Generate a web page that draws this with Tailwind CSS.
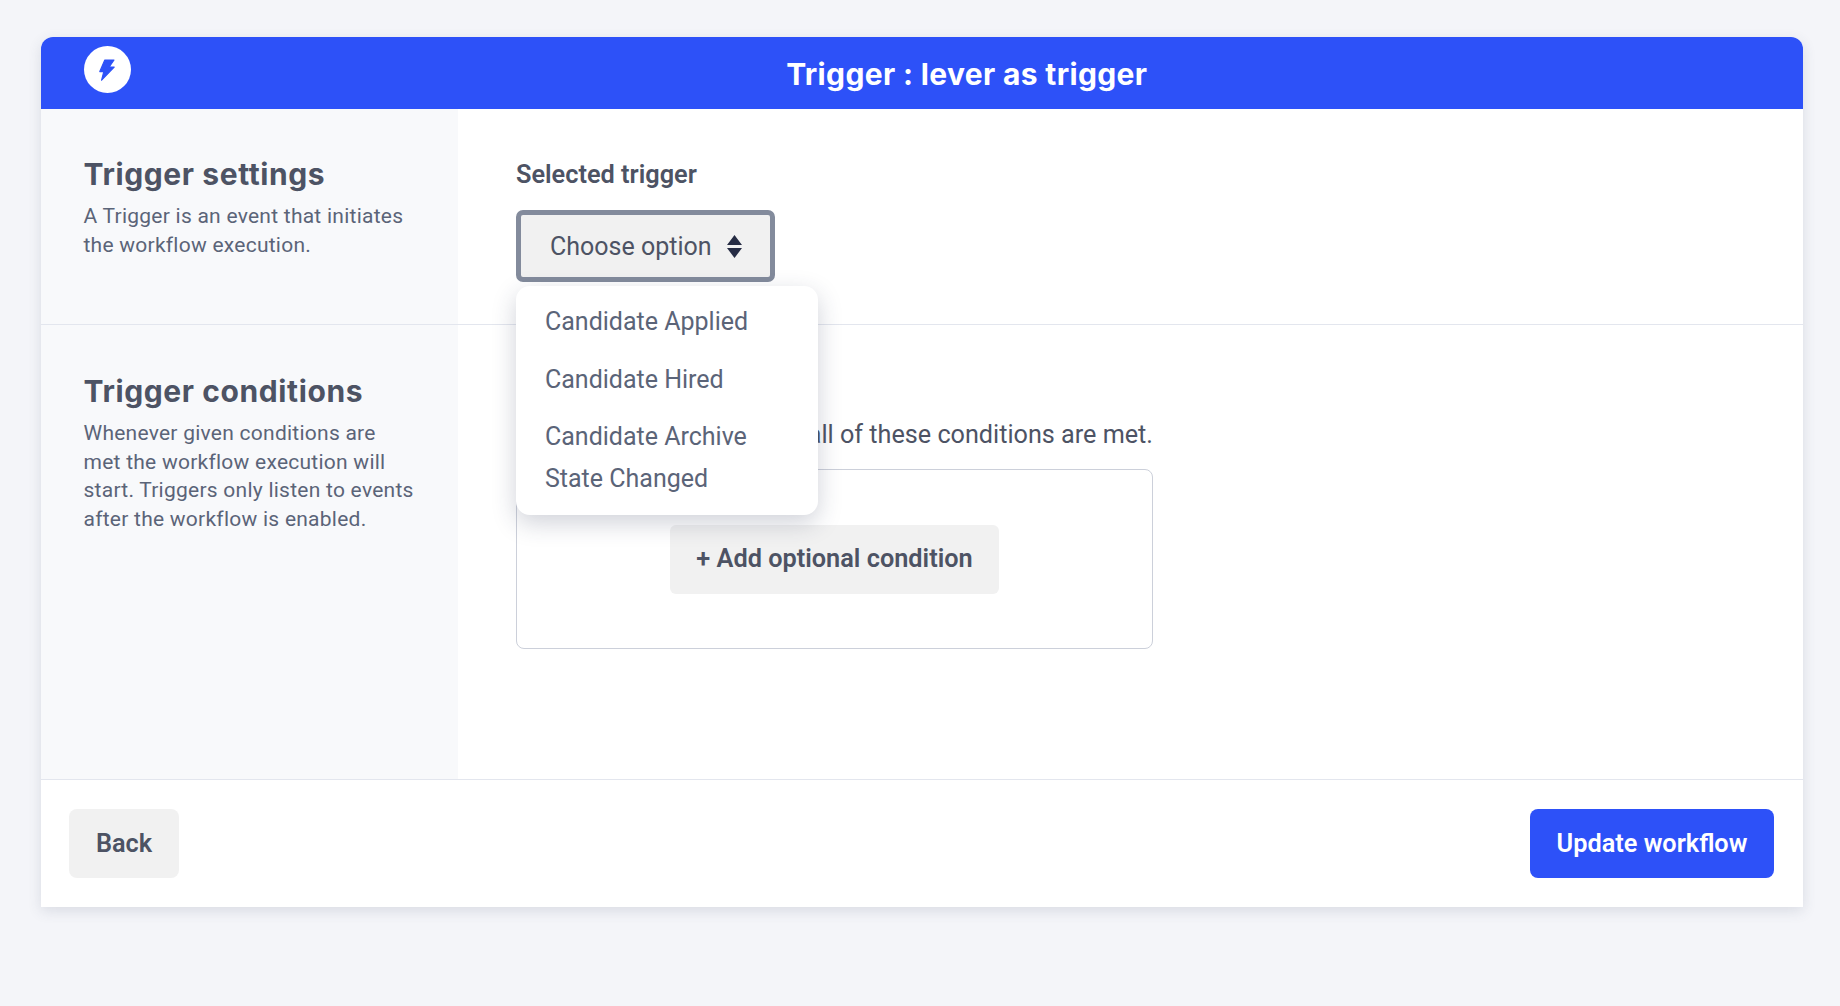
<!DOCTYPE html>
<html lang="en">
<head>
    <meta charset="UTF-8">
    <title>Trigger : lever as trigger</title>
    <script src="https://cdn.jsdelivr.net/npm/@tailwindcss/browser@4"></script>
</head>
<body class="bg-[#f4f5f9] h-[1006px] overflow-hidden font-['Roboto',sans-serif] text-[#4d5364]">
    <div class="pt-[37px] pl-[41px] pr-[37px]">
        <div class="bg-white rounded-t-[12px] shadow-[0_4px_14px_rgba(60,70,100,0.14)]">
            <!-- Header -->
            <div class="flex h-[72px] bg-[#2d51f8] rounded-t-[12px] pl-[42.5px]">
                <div class="w-[47px] h-[47px] mt-[9px] rounded-full bg-white flex items-center justify-center">
                    <svg class="w-[16px] h-[22px]" viewBox="0 0 16 22"><path d="M5.8 1H15L10.2 8H15.2L2.6 21.2L4.8 12.6H.8z" fill="#2d51f8" stroke="#2d51f8" stroke-width="1.2" stroke-linejoin="round"/></svg>
                </div>
                <div class="flex-1 text-center text-white font-['Inter',sans-serif] font-bold text-[30px] leading-[74px] tracking-[0.35px]">Trigger : lever as trigger</div>
            </div>

            <!-- Trigger settings -->
            <div class="flex h-[216px] border-b border-[#e3e6ee]">
                <div class="w-[417px] bg-[#f8f9fb] pl-[42.5px] pt-[45px]">
                    <h2 class="font-['Inter',sans-serif] font-bold text-[30px] leading-[40px] tracking-[0.6px]">Trigger settings</h2>
                    <p class="text-[21px] tracking-[0.25px] leading-[29px] mt-[8px] text-[#5b6478]">A Trigger is an event that initiates<br>the workflow execution.</p>
                </div>
                <div class="flex-1 pl-[58px] pt-[46px] relative">
                    <div class="text-[25.3px] font-semibold leading-[40px]">Selected trigger</div>
                    <button class="mt-[15px] w-[259px] h-[72px] bg-[#f1f1f1] border-[5px] border-[#838b9c] rounded-[7px] flex items-center justify-between pl-[29px] pr-[28px] pt-[1px] text-[25px]">
                        <span>Choose option</span>
                        <svg class="w-[15px] h-[23px]" viewBox="0 0 15 23"><path d="M7.5 0L15 10H0zM0 13h15L7.5 23z" fill="#262c44"/></svg>
                    </button>
                    <!-- Dropdown -->
                    <div class="absolute z-10 left-[58px] top-[177px] w-[302px] h-[229px] bg-white rounded-[14px] shadow-[0_8px_24px_rgba(40,50,80,0.22)] pl-[29px] pt-[18px] text-[25px] text-[#5b6478]">
                        <div class="leading-[36px]">Candidate Applied</div>
                        <div class="leading-[36px] mt-[22px]">Candidate Hired</div>
                        <div class="leading-[42px] mt-[18px]">Candidate Archive<br>State Changed</div>
                    </div>
                </div>
            </div>

            <!-- Trigger conditions -->
            <div class="flex h-[455px] border-b border-[#e3e6ee]">
                <div class="w-[417px] bg-[#f8f9fb] pl-[42.5px] pt-[46px]">
                    <h2 class="font-['Inter',sans-serif] font-bold text-[30px] leading-[40px] tracking-[0.6px]">Trigger conditions</h2>
                    <p class="text-[21px] tracking-[0.25px] leading-[28.5px] mt-[8px] text-[#5b6478]">Whenever given conditions are<br>met the workflow execution will<br>start. Triggers only listen to events<br>after the workflow is enabled.</p>
                </div>
                <div class="flex-1 pl-[58px] pt-[92px]">
                    <div class="w-[637px] text-right text-[25.2px] leading-[36px]">Start the workflow only if all of these conditions are met.</div>
                    <div class="mt-[16px] w-[637px] h-[180px] border border-[#ccd0da] rounded-[8px] flex items-center justify-center">
                        <button class="w-[329px] h-[69px] bg-[#f1f1f1] rounded-[6px] font-semibold text-[25.3px]">+ Add optional condition</button>
                    </div>
                </div>
            </div>

            <!-- Footer -->
            <div class="flex items-start justify-between h-[127px] pt-[29px] pl-[28px] pr-[29px]">
                <button class="w-[110px] h-[69px] bg-[#f1f1f1] rounded-[8px] font-semibold text-[25.3px]">Back</button>
                <button class="w-[244px] h-[69px] bg-[#2d51f8] rounded-[8px] font-semibold text-[25.3px] text-white">Update workflow</button>
            </div>
        </div>
    </div>
</body>
</html>
